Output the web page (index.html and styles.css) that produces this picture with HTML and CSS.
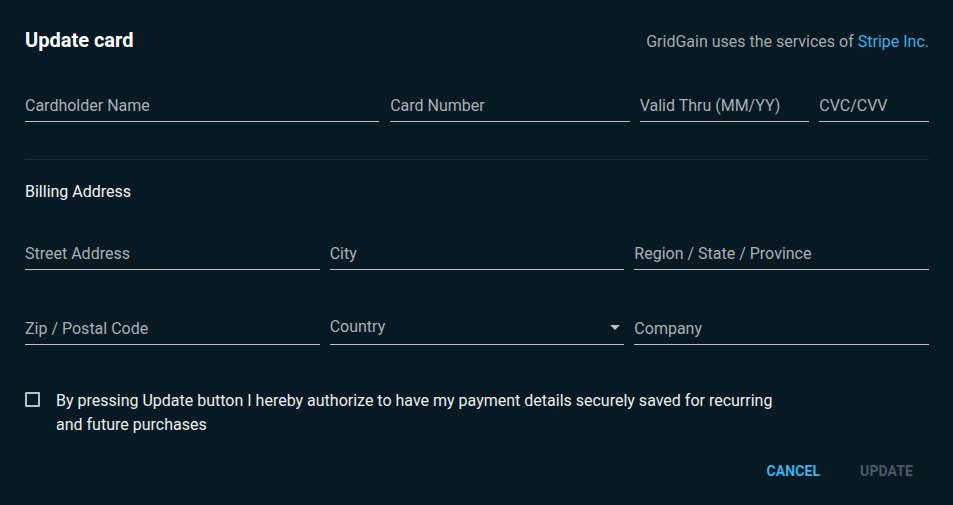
FILE: index.html
```html
<!DOCTYPE html>
<html>
<head>
<meta charset="utf-8">
<link rel="stylesheet" href="styles.css">
</head>
<body>
<div class="dialog">
  <div class="header">
    <h1 class="title">Update card</h1>
    <div class="note">GridGain uses the services of <a class="link">Stripe Inc.</a></div>
  </div>
  <div class="row row-card">
    <div class="field w-name">Cardholder Name</div>
    <div class="field w-number">Card Number</div>
    <div class="field w-valid">Valid Thru (MM/YY)</div>
    <div class="field w-cvc">CVC/CVV</div>
  </div>
  <div class="divider"></div>
  <div class="section">Billing Address</div>
  <div class="row row-3 row-a">
    <div class="field">Street Address</div>
    <div class="field">City</div>
    <div class="field">Region / State / Province</div>
  </div>
  <div class="row row-3 row-b">
    <div class="field">Zip / Postal Code</div>
    <div class="field select"><span class="sel-label">Country</span><span class="arrow"></span></div>
    <div class="field">Company</div>
  </div>
  <div class="consent">
    <span class="checkbox"></span>
    <span class="consent-text">By pressing Update button I hereby authorize to have my payment details securely saved for recurring<br>and future purchases</span>
  </div>
  <div class="actions">
    <button class="btn btn-cancel">Cancel</button>
    <button class="btn btn-update">Update</button>
  </div>
</div>
</body>
</html>
```
FILE: styles.css
```css
html, body {
  margin: 0;
  padding: 0;
  background: #071923;
}
body {
  font-family: Roboto, "Noto Sans", sans-serif;
  width: 953px;
  height: 505px;
  overflow: hidden;
}
.dialog {
  padding: 24px 24px 0 25px;
}
.header {
  display: flex;
  justify-content: space-between;
  align-items: center;
  height: 32px;
}
.title {
  margin: 0;
  font-size: 20px;
  font-weight: 700;
  color: #ffffff;
  line-height: 32px;
}
.note {
  font-size: 16px;
  color: #a3aaaf;
  padding-top: 3px;
}
.link {
  color: #3cb0e8;
}
.row {
  display: flex;
  gap: 10px;
}
.row-card {
  margin-top: 29px;
}
.field {
  box-sizing: border-box;
  height: 37px;
  padding: 9px 0 3px;
  line-height: 24px;
  font-size: 16px;
  color: #a9b0b5;
  border-bottom: 1px solid #bcc2c6;
  white-space: nowrap;
}
.w-name { width: 355px; }
.w-number { width: 240px; margin-left: 1px; }
.w-valid { width: 170px; }
.w-cvc { width: 110px; }
.divider {
  margin-top: 37px;
  height: 1px;
  background: #1e2e38;
}
.section {
  margin-top: 20px;
  line-height: 24px;
  font-size: 16px;
  color: #f2f4f5;
}
.row-3 .field {
  flex: 1;
}
.row-a { margin-top: 29px; }
.row-b { margin-top: 38px; }
.select {
  display: flex;
  justify-content: space-between;
  align-items: center;
  padding-top: 7px;
  padding-bottom: 5px;
}
.arrow {
  width: 0;
  height: 0;
  border-left: 5px solid transparent;
  border-right: 5px solid transparent;
  border-top: 5px solid #b8bec2;
  margin-right: 4px;
  margin-top: 1px;
}
.consent {
  margin-top: 44px;
  display: flex;
  align-items: flex-start;
}
.checkbox {
  box-sizing: border-box;
  flex: none;
  width: 15px;
  height: 15px;
  margin-top: 3px;
  border: 2px solid #b8bec2;
  border-radius: 1px;
}
.consent-text {
  margin-left: 16px;
  font-size: 16px;
  line-height: 24px;
  color: #eceef0;
}
.actions {
  margin-top: 16px;
  display: flex;
  justify-content: flex-end;
  gap: 8px;
}
.btn {
  height: 36px;
  padding: 0 16px;
  background: none;
  border: none;
  font-family: Roboto, "Noto Sans", sans-serif;
  font-size: 14px;
  font-weight: 700;
  text-transform: uppercase;
  letter-spacing: 0.1px;
}
.btn-cancel { color: #3cb0e8; }
.btn-update { color: #4a5a64; }
```
